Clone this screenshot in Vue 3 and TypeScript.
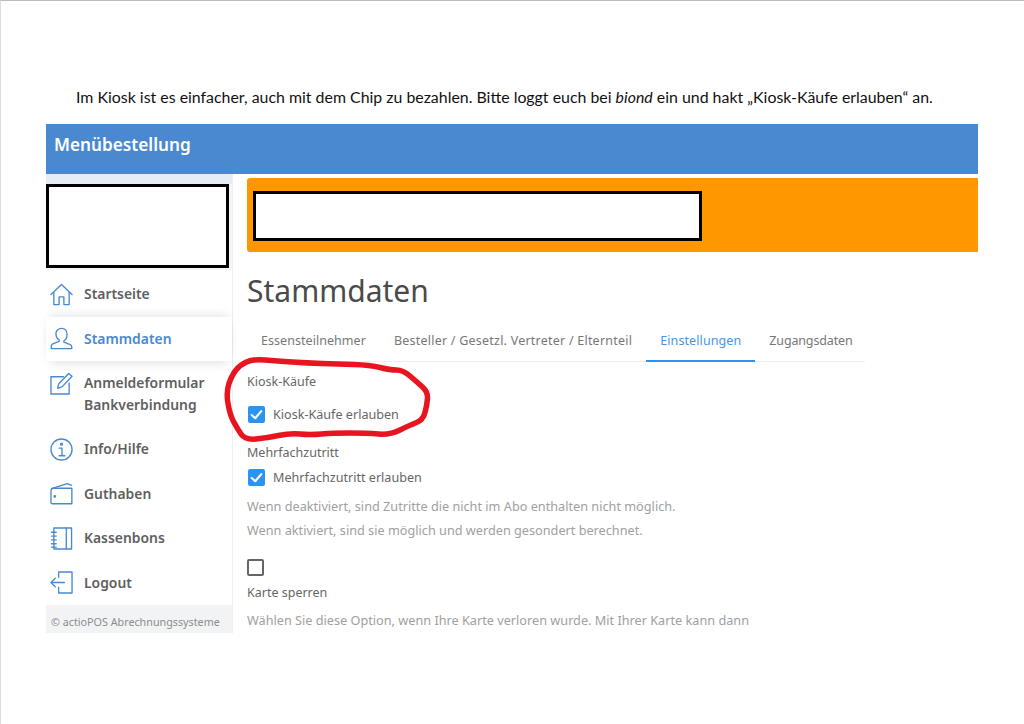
<script setup lang="ts">
interface NavItem { id: string; labels: string[]; active?: boolean }
const nav: NavItem[] = [
  { id: 'home', labels: ['Startseite'] },
  { id: 'user', labels: ['Stammdaten'], active: true },
  { id: 'edit', labels: ['Anmeldeformular', 'Bankverbindung'] },
  { id: 'info', labels: ['Info/Hilfe'] },
  { id: 'wallet', labels: ['Guthaben'] },
  { id: 'book', labels: ['Kassenbons'] },
  { id: 'logout', labels: ['Logout'] },
]
const tabs = ['Essensteilnehmer', 'Besteller / Gesetzl. Vertreter / Elternteil', 'Einstellungen', 'Zugangsdaten']

const pts: [number, number][] = [
  [20, 10], [33, 4], [57, 6], [87, 8], [117, 9], [150, 10], [170, 15], [183, 15], [197, 27], [208, 37],
  [207, 50], [203, 65], [190, 70], [170, 80], [147, 78], [113, 78], [90, 80], [70, 78], [47, 83], [25, 85],
  [17, 73], [10, 60], [6, 37], [12, 20],
]
const mid = (a: [number, number], b: [number, number]) => `${(a[0] + b[0]) / 2} ${(a[1] + b[1]) / 2}`
const scribble =
  `M${mid(pts[pts.length - 1], pts[0])}` +
  pts.map((p, i) => `Q${p[0]} ${p[1]} ${mid(p, pts[(i + 1) % pts.length])}`).join('') +
  'Z'
</script>

<template>
  <div class="page">
    <p class="intro">Im Kiosk ist es einfacher, auch mit dem Chip zu bezahlen. Bitte loggt euch bei <em>biond</em> ein und hakt „Kiosk-Käufe erlauben“ an.</p>
    <div class="app">
      <header class="topbar">Menübestellung</header>
      <div class="body">
        <aside class="side">
          <div class="logo-wrap"><div class="redact logo"></div></div>
          <nav class="nav">
            <div v-for="n in nav" :key="n.id" class="nav-item" :class="{ active: n.active, tall: n.labels.length > 1 }">
              <svg class="ico" viewBox="0 0 24 24" fill="none" stroke="#4a89d0" stroke-width="1.4" stroke-linejoin="round" stroke-linecap="round">
                <template v-if="n.id === 'home'">
                  <path d="M1 12 12 1.500 23 12" />
                  <path d="M4 10v12.500h5.500V14.500h5v8H20V10" />
                </template>
                <template v-else-if="n.id === 'user'">
                  <path d="M12 1.500c3.600 0 5.800 2.600 5.800 6.200 0 3-1.300 5.400-3.300 6.600v1.600l6.600 2.600c1.200.5 1.600 1.400 1.600 2.400v1.600H1.300V20c0-1 .4-1.900 1.600-2.400l6.600-2.600v-1.600c-2-1.200-3.300-3.600-3.300-6.600C6.200 4.100 8.400 1.500 12 1.500Z" />
                </template>
                <template v-else-if="n.id === 'edit'">
                  <path d="M20 11.500V23H1V5h13" />
                  <path d="M8 17l1-4.500L19.500 1.500l3.500 3L12.500 15.500 8 17Z" />
                </template>
                <template v-else-if="n.id === 'info'">
                  <circle cx="12" cy="12" r="11" />
                  <circle cx="12" cy="6.500" r="1" />
                  <path d="M9.500 10.500H12.500V18M9.500 18.500h6" />
                </template>
                <template v-else-if="n.id === 'wallet'">
                  <path d="M1 9.500V21.500c0 .8.600 1.200 1.200 1.200H22.800V6.500H3.500C2 6.500 1 7.800 1 9.500Z" />
                  <path d="M1.500 7 18 1.800l4.500 1.700" />
                  <circle cx="5" cy="15" r=".7" />
                </template>
                <template v-else-if="n.id === 'book'">
                  <path d="M4 1h18.500v22H4z" />
                  <path d="M17 1v22" />
                  <path d="M1.500 5.500h5M1.500 9.500h5M1.500 13.500h5M1.500 17.500h5M1.500 21h5" />
                </template>
                <template v-else>
                  <path d="M9 6.500V1h14v22H9v-6" />
                  <path d="M1 12h14M1 12l4.500-4.500M1 12l4.500 4.500" />
                </template>
              </svg>
              <div class="nav-labels">
                <span v-for="l in n.labels" :key="l">{{ l }}</span>
              </div>
            </div>
          </nav>
          <div class="copy">© actioPOS Abrechnungssysteme</div>
        </aside>
        <main class="main">
          <div class="banner"><div class="redact banner-box"></div></div>
          <h1>Stammdaten</h1>
          <div class="tabs">
            <span v-for="t in tabs" :key="t" class="tab" :class="{ on: t === 'Einstellungen' }">{{ t }}</span>
          </div>
          <section class="form">
            <h2 class="h-first">Kiosk-Käufe</h2>
            <label class="check first">
              <span class="box on"><svg viewBox="0 0 16 16" fill="none" stroke="#fff" stroke-width="2" stroke-linecap="round" stroke-linejoin="round"><path d="M3.500 8.500 6.800 11.500 12.500 4.800" /></svg></span>
              Kiosk-Käufe erlauben
            </label>
            <h2 class="h-second">Mehrfachzutritt</h2>
            <label class="check">
              <span class="box on"><svg viewBox="0 0 16 16" fill="none" stroke="#fff" stroke-width="2" stroke-linecap="round" stroke-linejoin="round"><path d="M3.500 8.500 6.800 11.500 12.500 4.800" /></svg></span>
              Mehrfachzutritt erlauben
            </label>
            <p class="hint h1">Wenn deaktiviert, sind Zutritte die nicht im Abo enthalten nicht möglich.</p>
            <p class="hint">Wenn aktiviert, sind sie möglich und werden gesondert berechnet.</p>
            <span class="box off"></span>
            <h2 class="h-third">Karte sperren</h2>
            <p class="hint h3">Wählen Sie diese Option, wenn Ihre Karte verloren wurde. Mit Ihrer Karte kann dann</p>
          </section>
        </main>
      </div>
    </div>
    <svg class="scribble" width="220" height="90" viewBox="0 0 220 90" fill="none" stroke="#e8141f" stroke-width="5.500" stroke-linecap="round" stroke-linejoin="round">
      <path :d="scribble" />
    </svg>
  </div>
</template>

<style>
html, body { margin: 0; background: #fff; }
</style>

<style scoped>
.page {
  position: relative;
  width: 1024px;
  height: 724px;
  box-sizing: border-box;
  border-top: 1px solid #bbb;
  border-left: 1px solid #ddd;
  overflow: hidden;
  background: #fff;
  font-family: "Noto Sans", "Open Sans", sans-serif;
}
.intro {
  margin: 0;
  padding: 86px 0 0 75px;
  height: 37px;
  font: 15.900px/20px Lato, "Liberation Sans", sans-serif;
  color: #111;
  white-space: nowrap;
}
.app { width: 932px; margin-left: 45px; }
.topbar {
  height: 50px;
  box-sizing: border-box;
  background: #4a89d0;
  color: #fff;
  font-size: 17.200px;
  font-weight: 600;
  line-height: 42px;
  padding-left: 8px;
}
.body { display: flex; }
.side { width: 187px; flex: none; border-right: 1px solid #eee; box-sizing: border-box; }
.logo-wrap { padding-top: 10px; height: 96px; box-sizing: border-box; background: linear-gradient(#e6ecf5 10px, #f4f6fa 10px); }
.redact { background: #fff; border: 3px solid #000; box-sizing: border-box; }
.logo { width: 183px; height: 84px; }
.nav { display: flex; flex-direction: column; margin-top: -2px; }
.nav-item {
  height: 44.500px;
  display: flex;
  align-items: center;
  gap: 11px;
  padding-left: 4px;
  color: #5f5f5f;
  font-size: 13.900px;
  font-weight: 600;
}
.nav-item.active { color: #4a89d0; background: #fff; box-shadow: 0 6px 10px -4px rgba(0,0,0,.12), 0 -6px 10px -4px rgba(0,0,0,.1); }
.nav-item.tall { height: 66px; align-items: flex-start; padding-top: 11px; box-sizing: border-box; }
.ico { width: 23px; height: 23px; flex: none; }
.nav-labels { display: flex; flex-direction: column; line-height: 22px; }
.nav-item:first-child { margin-top: 4px; }
.copy {
  background: #f2f3f5;
  height: 28px;
  box-sizing: border-box;
  padding-left: 5px;
  font-size: 10.750px;
  color: #8c8c8c;
  line-height: 34px;
  white-space: nowrap;
  overflow: hidden;
}
.main { flex: 1; padding-left: 14px; padding-top: 4px; min-width: 0; }
.banner {
  height: 74px;
  background: #ff9800;
  border-radius: 3px 0 0 3px;
  padding: 13px 0 0 6px;
  box-sizing: border-box;
}
.banner-box { width: 449px; height: 50px; }
h1 {
  margin: 19px 0 0;
  font-size: 30px;
  font-weight: 400;
  line-height: 40px;
  color: #4a4a4a;
}
.tabs {
  display: flex;
  width: 618px;
  margin-top: 14px;
  border-bottom: 1.500px solid #eee;
  height: 36px;
  box-sizing: content-box;
}
.tab {
  padding: 0 14px;
  font-size: 12.500px;
  line-height: 32px;
  color: #777;
  height: 36px;
  box-sizing: border-box;
  white-space: nowrap;
}
.tab:nth-child(1) { letter-spacing: .05px; }
.tab:nth-child(2) { letter-spacing: .23px; }
.tab:nth-child(3) { letter-spacing: .1px; }
.tab:nth-child(4) { letter-spacing: -.15px; }
.tab.on { color: #3f97ee; border-bottom: 2px solid #2b94f2; margin-bottom: -1px; height: 37px; }
.form { font-size: 12.600px; color: #666; }
h2 { margin: 0; font-size: 12.500px; font-weight: 400; color: #666; line-height: 16px; }
.h-first { margin-top: 12px; }
.check { display: flex; align-items: center; gap: 8px; font-size: 12.600px; color: #666; height: 18px; }
.check.first { margin-top: 15px; }
.h-second { margin-top: 22px; }
.check:not(.first) { margin-top: 7px; }
.box { display: block; width: 17px; height: 17px; box-sizing: border-box; border-radius: 2px; flex: none; }
.box.on { background: #2b94f2; margin-left: 1px; }
.box.on svg { display: block; width: 17px; height: 17px; }
.box.off { border: 2px solid #666; margin-top: 17px; }
.hint { margin: 0; font-size: 12.700px; line-height: 24px; color: #a0a0a0; white-space: nowrap; }
.h1 { margin-top: 8px; }
.h3 { margin-top: 7px; }
.h-third { margin-top: 9px; }
.scribble { position: absolute; left: 219px; top: 354px; }
</style>
